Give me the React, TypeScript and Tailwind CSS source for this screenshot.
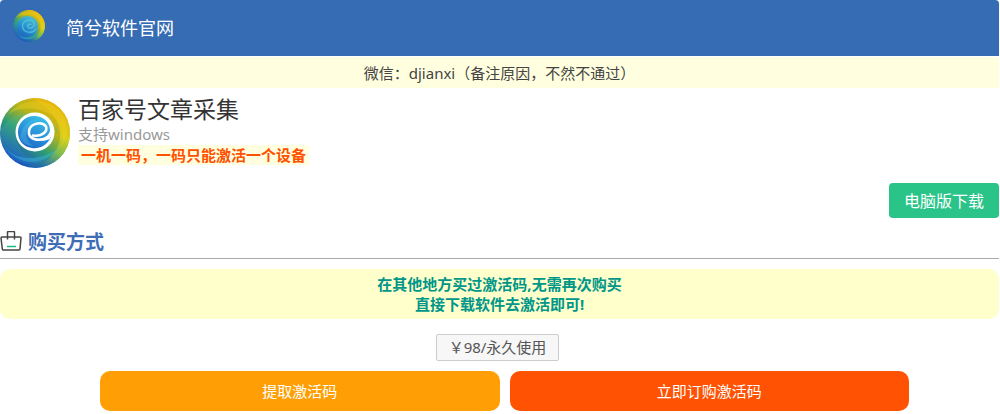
import { useId } from "react"
import clsx from "clsx"

interface SwirlLogoProps {
  className?: string
  muted?: boolean
}

function SwirlLogo({ className, muted = false }: SwirlLogoProps) {
  const id = useId()

  return (
    <svg viewBox="0 0 70 70" aria-hidden="true" className={clsx("shrink-0", className)}>
      <defs>
        <linearGradient id={`${id}-base`} x1="0.8" y1="0.1" x2="0.2" y2="0.85">
          <stop offset="0" stopColor="#e8b30c" />
          <stop offset="0.35" stopColor="#b5b41c" />
          <stop offset="0.65" stopColor="#2f9c74" />
          <stop offset="1" stopColor="#1b58bc" />
        </linearGradient>
        <linearGradient id={`${id}-right`} x1="0.6" y1="0" x2="0.3" y2="1">
          <stop offset="0" stopColor="#e8ae0c" />
          <stop offset="0.45" stopColor="#d8cf1c" />
          <stop offset="0.7" stopColor="#7cbc50" />
          <stop offset="1" stopColor="#1668bd" />
        </linearGradient>
        <linearGradient id={`${id}-left`} x1="0.9" y1="0" x2="0.3" y2="1">
          <stop offset="0" stopColor="#cfc51c" />
          <stop offset="0.45" stopColor="#3aa97c" />
          <stop offset="1" stopColor="#1c62cc" />
        </linearGradient>
        <linearGradient id={`${id}-core`} x1="0.8" y1="0.1" x2="0.3" y2="1">
          <stop offset="0" stopColor="#38bce6" />
          <stop offset="0.5" stopColor="#2a94da" />
          <stop offset="1" stopColor="#1c66c4" />
        </linearGradient>
        <clipPath id={`${id}-clip`}>
          <circle cx="35" cy="35" r="35" />
        </clipPath>
      </defs>
      <g clipPath={`url(#${id}-clip)`}>
        <rect width="70" height="70" fill={`url(#${id}-base)`} />
        <path d="M30 0C52 -4 72 14 70 38C69 58 52 70 34 70C52 62 62 48 60 34C58 18 46 6 30 0Z" fill={`url(#${id}-right)`} />
        <path d="M0 34C5 20 22 12 38 16C50 19 58 28 58 36C52 24 36 18 24 24C12 32 14 50 28 58C36 62 46 62 52 58C40 70 18 68 8 56C2 50 0 42 0 34Z" fill={`url(#${id}-left)`} opacity="0.75" />
        <path d="M8 16C26 6 50 10 60 26C64 34 64 42 60 50C72 36 68 16 54 8C40 0 20 2 8 16Z" fill="#f4d420" opacity="0.35" />
        <path d="M2 46C12 61 33 66 58 51C46 66 20 72 2 46Z" fill="#39b7d6" opacity="0.45" />
      </g>
      {muted ? (
        <>
          <circle cx="32" cy="36" r="23" fill={`url(#${id}-core)`} opacity="0.9" />
          <path
            d="M50 42C43 53 22 50 21 36C20 24 36 18 44 25C50 33 42 42 34 39C29 35 34 29 39 32"
            fill="none"
            stroke="#55c6e0"
            strokeWidth="3"
            strokeLinecap="round"
            opacity="0.8"
          />
        </>
      ) : (
        <>
          <circle cx="35" cy="34" r="19.5" fill="#fff" />
          <path
            d="M51 39C47 48 39 51 32 50C23 49 18 42 18 34C18 25 25 18 34 18C43 18 50 24 50 32C50 36 46 40 38 41C43 43 48 41 51 39Z"
            fill={`url(#${id}-core)`}
          />
          <path
            d="M33 37.5C41 39 48 34 46 28.5C42 23 30 25 29 33C28 41 37 44 49 40"
            fill="none"
            stroke="#fff"
            strokeWidth="2.6"
            strokeLinecap="round"
          />
          <path d="M20 39C22 26 31 20 42 22C32 23 26 29 26 37C27 43 30 46 34 48C26 48 21 44 20 39Z" fill="#54c5ee" opacity="0.35" />
        </>
      )}
    </svg>
  )
}

function ShoppingBagIcon() {
  return (
    <svg viewBox="0 0 22 22" fill="none" aria-hidden="true" className="size-[22px] shrink-0">
      <path d="M2 6H20Q21.2 6 21 7L20 18Q20 19 19 19H3.500Q2.500 19 2.300 18L1 7Q1 6 2 6Z" stroke="#444" strokeWidth="1.5" />
      <path d="M7.500 8.500V1.500Q7.500 0.500 8.500 0.500H13.500Q14.500 0.500 14.500 1.500V8.500" stroke="#444" strokeWidth="1.5" />
      <path d="M7 15.500H16" stroke="#22b585" strokeWidth="1.5" />
    </svg>
  )
}

export default function App() {
  return (
    <div className="mr-px font-['Noto_Sans','Noto_Sans_CJK_SC',sans-serif] text-[15px] leading-5 text-[#444]">
      <header className="flex h-14 items-center rounded-t-sm bg-[#356cb3] pl-[13px] text-white">
        <SwirlLogo muted className="mb-1 size-8" />
        <span className="ml-[21px] text-lg">简兮软件官网</span>
      </header>

      <p className="mt-px bg-[#ffffdf] pt-[6px] pb-[5px] text-center">微信：djianxi（备注原因，不然不通过）</p>

      <main>
        <section className="mt-[10px] flex gap-2">
          <SwirlLogo className="size-[70px]" />
          <div className="flex flex-col items-start">
            <h1 className="mb-1 text-[23px] leading-[22px] text-[#333]">百家号文章采集</h1>
            <p className="text-[#999]">支持windows</p>
            <p className="mt-px bg-[#ffffdf] px-[3px] font-bold text-[#ff5000]">一机一码，一码只能激活一个设备</p>
          </div>
        </section>

        <div className="mt-[15px] flex justify-end">
          <button type="button" className="rounded bg-[#2ac489] px-[15px] pt-[6px] pb-1 text-base leading-[25px] text-white">
            电脑版下载
          </button>
        </div>

        <h2 className="mt-[10px] flex items-center gap-[6px] border-b border-[#aaa] pb-[2px] text-[19px] leading-7 font-bold text-[#3d6db5]">
          <ShoppingBagIcon />
          购买方式
        </h2>

        <p className="mt-[10px] rounded-[10px] bg-[#ffffcc] py-[5px] text-center font-bold text-[#009688]">
          在其他地方买过激活码,无需再次购买
          <br />
          直接下载软件去激活即可!
        </p>

        <div className="mt-[15px] flex justify-center pr-1">
          <button type="button" className="rounded-xs border border-[#ccc] bg-[#f7f7f7] px-3 pt-[2px] pb-[3px] text-[#555]">
            ￥98/永久使用
          </button>
        </div>

        <div className="mt-[10px] flex justify-center text-white">
          <button type="button" className="ml-[10px] h-10 w-2/5 rounded-[10px] bg-[#ff9f05]">
            提取激活码
          </button>
          <button type="button" className="ml-[10px] h-10 w-2/5 rounded-[10px] bg-[#ff5203]">
            立即订购激活码
          </button>
        </div>
      </main>
    </div>
  )
}
